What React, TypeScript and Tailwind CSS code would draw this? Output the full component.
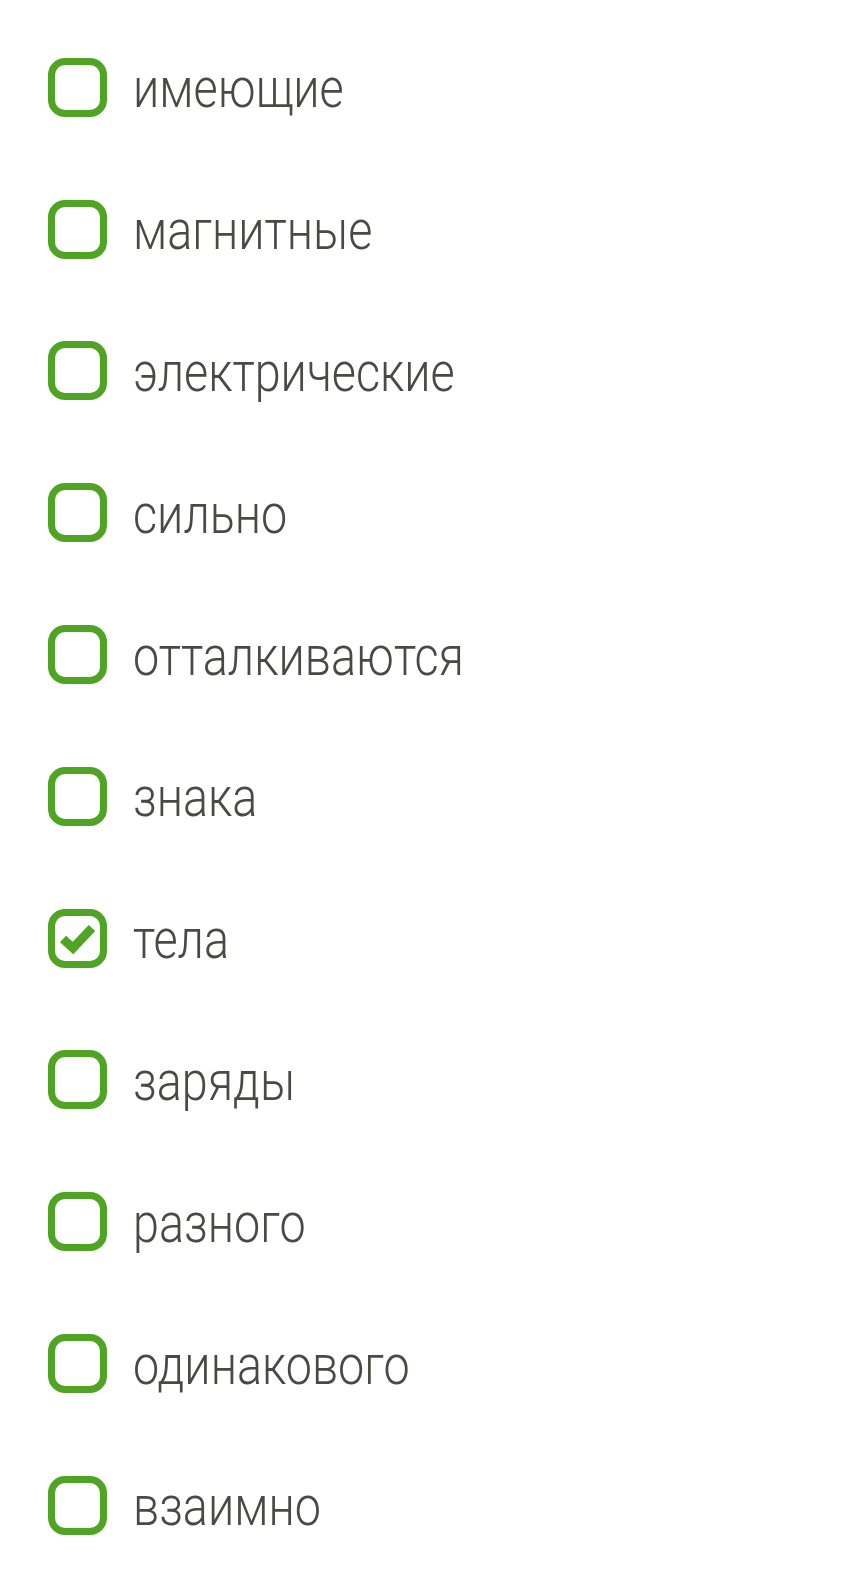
const items = [
  { label: "имеющие", checked: false },
  { label: "магнитные", checked: false },
  { label: "электрические", checked: false },
  { label: "сильно", checked: false },
  { label: "отталкиваются", checked: false },
  { label: "знака", checked: false },
  { label: "тела", checked: true },
  { label: "заряды", checked: false },
  { label: "разного", checked: false },
  { label: "одинакового", checked: false },
  { label: "взаимно", checked: false },
];

const Box = ({ checked }: { checked: boolean }) => (
  <div className="flex h-[59px] w-[59px] shrink-0 items-center justify-center rounded-[17px] border-[7px] border-[#4fa523] bg-white">
    {checked ? (
      <svg width="45" height="45" viewBox="0 0 45 45">
        <path
          d="M8 23 L18 32 L37 12"
          fill="none"
          stroke="#4fa523"
          strokeWidth="9"
          strokeLinejoin="miter"
        />
      </svg>
    ) : null}
  </div>
);

export default function App() {
  return (
    <div className="min-h-[1587px] w-[864px] bg-white pt-[16.5px] font-['Roboto',sans-serif]">
      {items.map((item) => (
        <div key={item.label} className="flex h-[141.8px] items-center pl-[48px]">
          <Box checked={item.checked} />
          <span className="ml-[26px] mt-[3px] origin-left scale-x-[0.85] text-[55px] font-light leading-none text-[#4a4a43]">
            {item.label}
          </span>
        </div>
      ))}
    </div>
  );
}
